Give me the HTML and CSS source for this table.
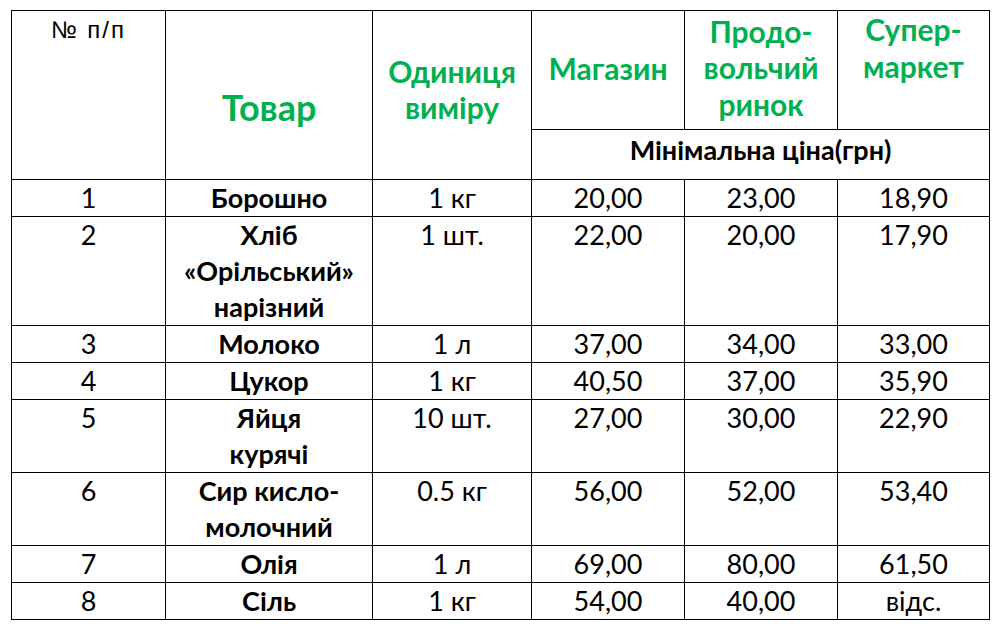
FILE: index.html
```html
<!DOCTYPE html>
<html lang="uk">
<head>
<meta charset="utf-8">
<title>Мінімальна ціна</title>
<link rel="stylesheet" href="styles.css">
</head>
<body>
<table class="prices">
  <colgroup>
    <col class="c-num">
    <col class="c-name">
    <col class="c-unit">
    <col class="c-shop">
    <col class="c-market">
    <col class="c-super">
  </colgroup>
  <thead>
    <tr class="h-top">
      <th rowspan="2" class="h-num">№ п/п</th>
      <th rowspan="2" class="h-green h-goods">Товар</th>
      <th rowspan="2" class="h-green h-unit">Одиниця<br>виміру</th>
      <th class="h-green h-mid">Магазин</th>
      <th class="h-green h-three">Продо-<br>вольчий<br>ринок</th>
      <th class="h-green h-topal">Супер-<br>маркет</th>
    </tr>
    <tr class="h-sub">
      <th colspan="3" class="h-min">Мінімальна ціна(грн)</th>
    </tr>
  </thead>
  <tbody>
    <tr><td>1</td><td class="name">Борошно</td><td>1 кг</td><td>20,00</td><td>23,00</td><td>18,90</td></tr>
    <tr><td>2</td><td class="name">Хліб<br>«Орільський»<br>нарізний</td><td>1 шт.</td><td>22,00</td><td>20,00</td><td>17,90</td></tr>
    <tr><td>3</td><td class="name">Молоко</td><td>1 л</td><td>37,00</td><td>34,00</td><td>33,00</td></tr>
    <tr><td>4</td><td class="name">Цукор</td><td>1 кг</td><td>40,50</td><td>37,00</td><td>35,90</td></tr>
    <tr><td>5</td><td class="name">Яйця<br>курячі</td><td>10 шт.</td><td>27,00</td><td>30,00</td><td>22,90</td></tr>
    <tr><td>6</td><td class="name">Сир кисло-<br>молочний</td><td>0.5 кг</td><td>56,00</td><td>52,00</td><td>53,40</td></tr>
    <tr><td>7</td><td class="name">Олія</td><td>1 л</td><td>69,00</td><td>80,00</td><td>61,50</td></tr>
    <tr class="last"><td>8</td><td class="name">Сіль</td><td>1 кг</td><td>54,00</td><td>40,00</td><td>відс.</td></tr>
  </tbody>
</table>
</body>
</html>
```

FILE: styles.css
```css
html, body {
  margin: 0;
  padding: 0;
  background: #ffffff;
}

body {
  font-family: Lato, "Open Sans", sans-serif;
  color: #000000;
}

.prices {
  margin: 10px 0 0 11px;
  border-collapse: collapse;
  table-layout: fixed;
  width: 978px;
  font-size: 27px;
  line-height: 36px;
}

.c-num { width: 154px; }
.c-name { width: 207px; }
.c-unit { width: 159px; }
.c-shop { width: 153px; }
.c-market { width: 153px; }
.c-super { width: 152px; }

.prices th,
.prices td {
  border: 1px solid #000000;
  padding: 0;
  text-align: center;
  vertical-align: top;
}

.prices td {
  font-weight: 400;
}

.prices td.name {
  font-weight: 700;
}

.prices .h-top {
  height: 119px;
}

.prices .h-sub {
  height: 50px;
}

.prices th.h-num {
  font-family: "Liberation Sans", Arial, sans-serif;
  font-weight: 400;
  font-size: 24px;
  letter-spacing: 2px;
  line-height: 36px;
  vertical-align: top;
  padding-top: 1px;
}

.prices th.h-green {
  color: #00b050;
  font-weight: 700;
  font-size: 30px;
  line-height: 36.5px;
}

.prices th.h-goods {
  font-size: 36px;
  vertical-align: middle;
  padding-top: 25px;
}

.prices th.h-unit {
  vertical-align: middle;
  padding-bottom: 12px;
}

.prices th.h-mid {
  vertical-align: middle;
  padding-bottom: 3px;
}

.prices th.h-three {
  vertical-align: middle;
  padding-bottom: 5px;
}

.prices th.h-topal {
  vertical-align: top;
}

.prices th.h-min {
  font-weight: 700;
  vertical-align: top;
  padding-top: 2px;
}
```
